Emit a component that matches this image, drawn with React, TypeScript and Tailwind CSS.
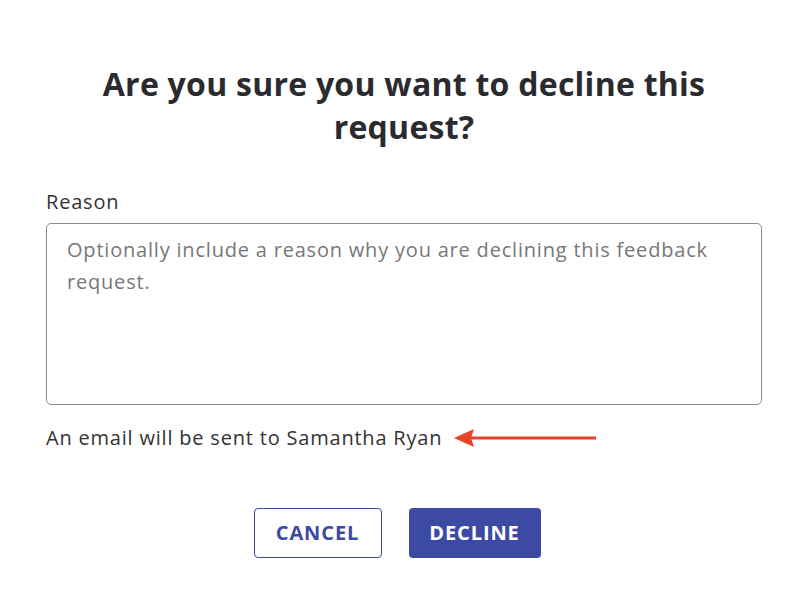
import React from "react";

const App = () => {
    return (
        <div className="w-[808px] h-[594px] bg-white px-[46px] pt-[62px] font-['Open_Sans',sans-serif] text-[#333333]">
            <h1 className="mx-auto w-[640px] text-center text-[32px] font-bold leading-[43px] tracking-[0.25px] text-[#2b2b2f]">
                Are you sure you want to decline this request?
            </h1>

            <p className="mt-[42px] text-[20px] leading-[24px] tracking-[0.8px]">Reason</p>
            <textarea
                className="mt-[9px] block h-[182px] w-full resize-none rounded-[5px] border border-[#8c8c8c] px-[20px] py-[10px] text-[20px] leading-[32px] tracking-[0.8px] outline-none placeholder:text-[#777777]"
                placeholder="Optionally include a reason why you are declining this feedback request."
            />

            <div className="mt-[21px] flex items-center gap-[12px]">
                <span className="text-[20px] leading-[24px] tracking-[0.8px]">An email will be sent to Samantha Ryan</span>
                <svg width="144" height="20" viewBox="0 0 144 20">
                    <polygon points="0,10 20,1 17,10 20,19" fill="#e8432a" />
                    <rect x="16" y="8.5" width="126" height="3" fill="#e8432a" />
                </svg>
            </div>

            <div className="mt-[58px] flex justify-center gap-[27px] pr-[14px]">
                <button className="h-[50px] w-[128px] rounded-[4px] border border-[#3d4aa3] bg-white text-[20px] font-bold tracking-[0.9px] text-[#3d4aa3]">
                    CANCEL
                </button>
                <button className="h-[50px] w-[132px] rounded-[4px] bg-[#3d4aa3] text-[20px] font-bold tracking-[0.9px] text-white">
                    DECLINE
                </button>
            </div>
        </div>
    );
};

export default App;
